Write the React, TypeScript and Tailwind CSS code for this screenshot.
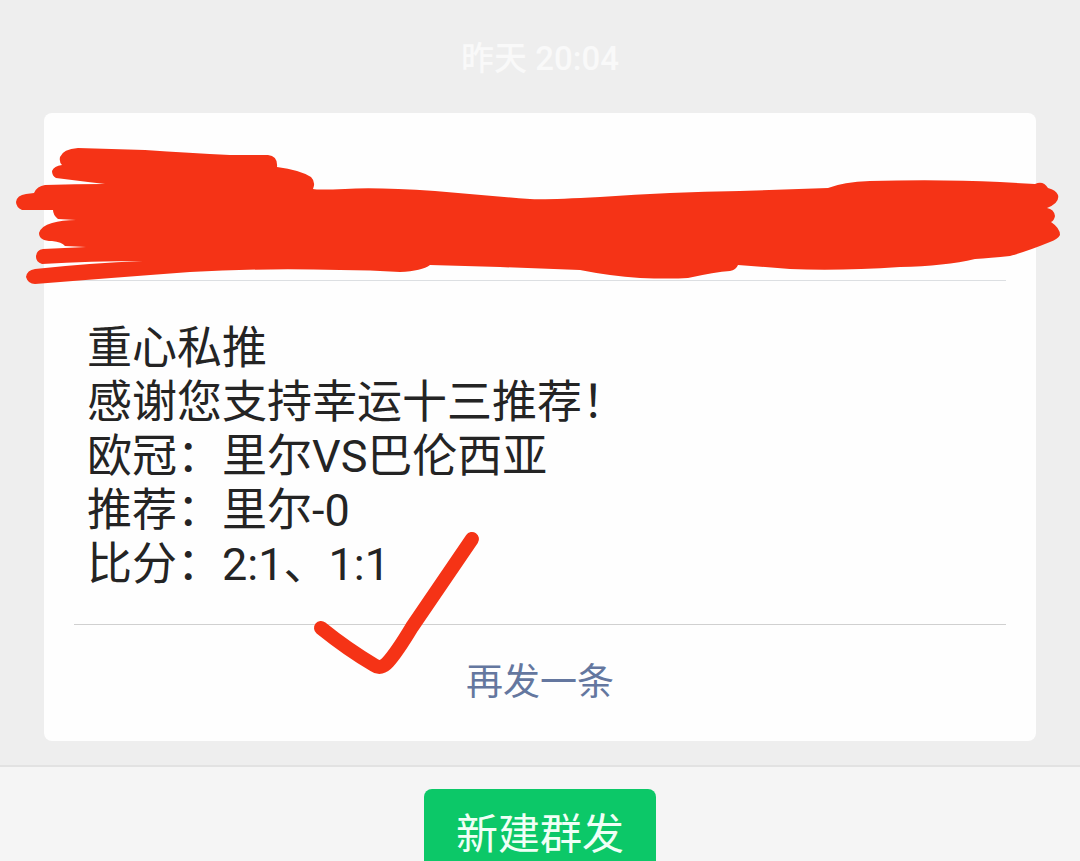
import React from 'react';

const lines = [
  '重心私推',
  '感谢您支持幸运十三推荐！',
  '欧冠：里尔VS巴伦西亚',
  '推荐：里尔-0',
  '比分：2:1、1:1',
];

function Scribble() {
  return (
    <svg
      className="absolute top-0 -left-11 w-[calc(100%+88px)] z-10 pointer-events-none"
      viewBox="0 113 1080 180"
      fill="#f53316"
      aria-hidden="true"
    >
      <path d="M60 157Q63 149 78 148L145 150Q190 153 230 155L268 155Q278 156 277 167Q300 170 311 177Q316 182 313 189Q318 190 345 189Q375 187 435 191Q480 195 530 199Q545 200 600 197Q670 192 740 191L828 188Q843 182 870 181Q940 179 1000 182L1035 184Q1043 180 1048 188Q1056 190 1058 195Q1060 203 1047 208Q1054 209 1055 216Q1054 221 1051 222Q1060 228 1060 235Q1058 239 1050 242Q1028 251 1010 256Q990 258 975 259Q945 266 900 267Q840 271 790 269L738 265Q736 270 730 271Q715 272 688 278Q670 279 640 278Q610 276 580 270L500 267L430 265Q422 271 400 272Q370 270 340 270Q260 268 190 272Q110 278 35 284Q28 284 26 277Q27 270 35 269Q90 263 143 261Q90 261 42 264Q36 262 36 257Q36 250 43 249L86 247L65 246Q62 242 52 241Q39 241 39 233Q41 226 52 223Q62 220 76 220L58 219Q53 215 53 210L22 210Q16 207 16 202Q17 195 26 194L34 193Q37 186 45 185Q75 184 105 184L88 182L56 178Q52 176 52 171Q54 166 62 165Q59 162 60 157Z" />
    </svg>
  );
}

function Tick() {
  return (
    <svg
      className="absolute left-56 -bottom-14 z-10 pointer-events-none"
      width="200"
      height="160"
      viewBox="298 519 200 160"
      fill="none"
      stroke="#f53316"
      strokeWidth="14"
      strokeLinecap="round"
      strokeLinejoin="round"
      aria-hidden="true"
    >
      <path d="M321 627Q347 648 374 664Q381 669 388 661Q397 651 412 626Q442 582 472 538" />
    </svg>
  );
}

export default function App() {
  return (
    <div className="h-screen overflow-hidden flex flex-col bg-[#eeeeee] font-[Roboto,'Noto_Sans_CJK_SC',sans-serif]">
      <main className="px-11 pb-6 shrink-0">
        <time className="block pt-9 pb-8 text-center text-[33px] leading-[45px] font-medium text-[#f9f9f9]">昨天 20:04</time>

        <article className="relative bg-[#fefefe] rounded-lg">
          <Scribble />
          <header className="h-[167px]" />
          <div className="relative mx-[30px] px-[13px] pt-[41px] pb-8 border-y border-[#d0d0d0] border-t-[#dcdfe2]">
            {lines.map((line) => (
              <p key={line} className="text-[45px] leading-[54px] text-[#242424]">{line}</p>
            ))}
            <Tick />
          </div>
          <button type="button" className="block w-full py-8 text-[37px] leading-[52px] text-[#64779f]">
            再发一条
          </button>
        </article>
      </main>

      <footer className="grow shrink-0 flex justify-center items-start pt-[22px] bg-[#f5f5f5] border-t-2 border-[#e2e2e2]">
        <button type="button" className="px-8 py-[14px] rounded-lg bg-[#0cc868] text-[42px] leading-[64px] text-[#f0fff6]">
          新建群发
        </button>
      </footer>
    </div>
  );
}
